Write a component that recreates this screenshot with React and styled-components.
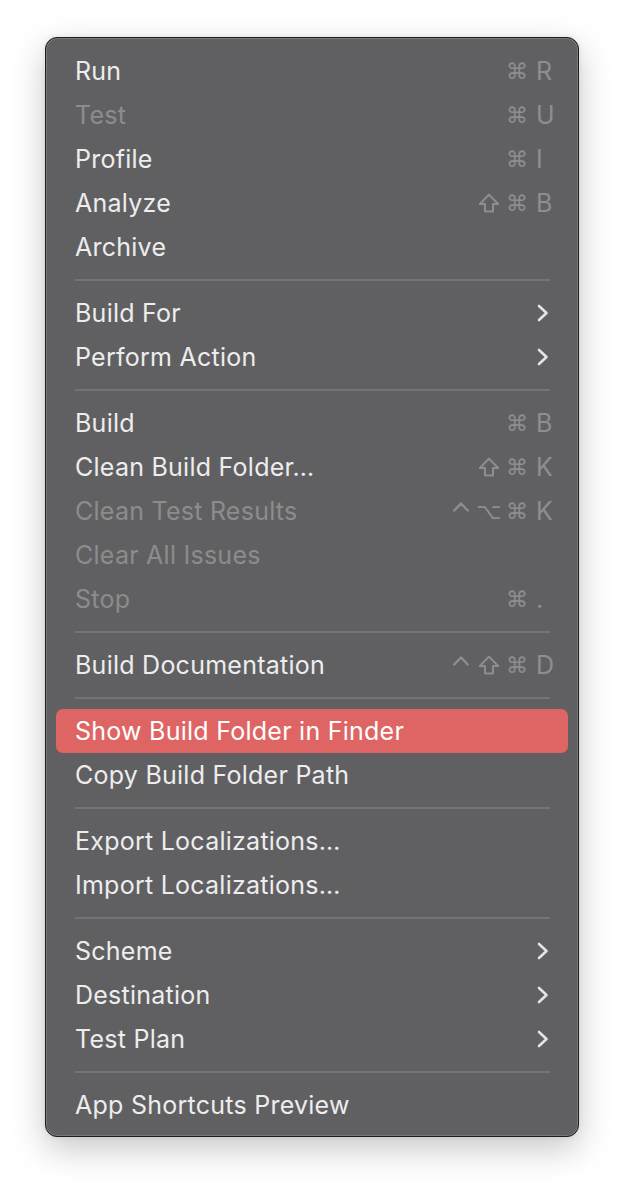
import React from "react";
import styled, { createGlobalStyle } from "styled-components";

const Global = createGlobalStyle`
  html, body { margin: 0; padding: 0; background: #ffffff; }
  body { font-family: "Inter", "Noto Sans", sans-serif; -webkit-font-smoothing: antialiased; }
`;

const Page = styled.div`
  padding: 37px 45px 53px 45px;
  width: 534px;
`;

const Panel = styled.div`
  box-sizing: border-box;
  width: 534px;
  background: #606062;
  border: 1px solid #1e1e1e;
  border-radius: 12px;
  box-shadow: inset 0 0 0 1px rgba(255, 255, 255, 0.16), 0 12px 34px rgba(0, 0, 0, 0.22), 0 0 6px rgba(0, 0, 0, 0.08);
  padding: 11px 10px 9px 10px;
  display: flex;
  flex-direction: column;
`;

const Row = styled.div`
  height: 44px;
  display: flex;
  align-items: center;
  padding: 0 14px 0 19px;
  border-radius: 7px;
  background: ${(p) => (p.$active ? "#df6565" : "transparent")};
  color: ${(p) => (p.$disabled ? "#8c8c8d" : p.$active ? "#ffffff" : "#ededed")};
  font-size: 25px;
  letter-spacing: 0.25px;
`;

const Label = styled.span`
  flex: 1;
  white-space: nowrap;
`;

const Shortcut = styled.span`
  display: flex;
  align-items: center;
  color: #8e8e90;
  font-family: "DejaVu Sans", "Inter", sans-serif;
  font-size: 22px;
`;

const Mod = styled.span`
  width: 28px;
  height: 28px;
  display: flex;
  align-items: center;
  justify-content: center;
`;

const Key = styled.span`
  width: 18px;
  margin-left: 5px;
  font-family: "Inter", sans-serif;
  font-size: 25px;
  letter-spacing: 0;
  text-align: left;
`;

const Sep = styled.div`
  height: 22px;
  display: flex;
  align-items: center;
  padding: 0 18px 0 19px;
  &::after {
    content: "";
    flex: 1;
    height: 2px;
    background: #747476;
  }
`;

const Chevron = () => (
  <svg width="14" height="20" viewBox="0 0 14 20" style={{ marginRight: 4 }}>
    <path d="M3 3 L10.5 10 L3 17" fill="none" stroke="#e4e4e4" strokeWidth="2.6" strokeLinecap="round" strokeLinejoin="round" />
  </svg>
);

const ShiftIcon = () => (
  <svg width="22" height="20" viewBox="0 0 22 20">
    <path d="M11 1.6 L20.2 11 L15 11 L15 18.6 L7 18.6 L7 11 L1.8 11 Z" fill="none" stroke="#8e8e90" strokeWidth="2" strokeLinejoin="round" />
  </svg>
);

const CtrlIcon = () => (
  <svg width="18" height="22" viewBox="0 0 18 22">
    <path d="M2.2 10.5 L9 3.5 L15.8 10.5" fill="none" stroke="#8e8e90" strokeWidth="2.4" strokeLinecap="round" strokeLinejoin="round" />
  </svg>
);

const modGlyph = (m) => {
  if (m === "shift") return <ShiftIcon />;
  if (m === "ctrl") return <CtrlIcon />;
  if (m === "opt") return "⌥";
  return "⌘";
};

const items = [
  { t: "Run", m: ["cmd"], k: "R" },
  { t: "Test", m: ["cmd"], k: "U", d: true },
  { t: "Profile", m: ["cmd"], k: "I" },
  { t: "Analyze", m: ["shift", "cmd"], k: "B" },
  { t: "Archive" },
  "sep",
  { t: "Build For", sub: true },
  { t: "Perform Action", sub: true },
  "sep",
  { t: "Build", m: ["cmd"], k: "B" },
  { t: "Clean Build Folder…", m: ["shift", "cmd"], k: "K" },
  { t: "Clean Test Results", m: ["ctrl", "opt", "cmd"], k: "K", d: true },
  { t: "Clear All Issues", d: true },
  { t: "Stop", m: ["cmd"], k: ".", d: true },
  "sep",
  { t: "Build Documentation", m: ["ctrl", "shift", "cmd"], k: "D" },
  "sep",
  { t: "Show Build Folder in Finder", a: true },
  { t: "Copy Build Folder Path" },
  "sep",
  { t: "Export Localizations…" },
  { t: "Import Localizations…" },
  "sep",
  { t: "Scheme", sub: true },
  { t: "Destination", sub: true },
  { t: "Test Plan", sub: true },
  "sep",
  { t: "App Shortcuts Preview" },
];

export default function App() {
  return (
    <>
      <Global />
      <Page>
        <Panel>
          {items.map((it, i) =>
            it === "sep" ? (
              <Sep key={i} />
            ) : (
              <Row key={i} $disabled={it.d} $active={it.a}>
                <Label>{it.t}</Label>
                {it.k && (
                  <Shortcut>
                    {it.m.map((m, j) => (
                      <Mod key={j}>{modGlyph(m)}</Mod>
                    ))}
                    <Key>{it.k}</Key>
                  </Shortcut>
                )}
                {it.sub && <Chevron />}
              </Row>
            )
          )}
        </Panel>
      </Page>
    </>
  );
}
